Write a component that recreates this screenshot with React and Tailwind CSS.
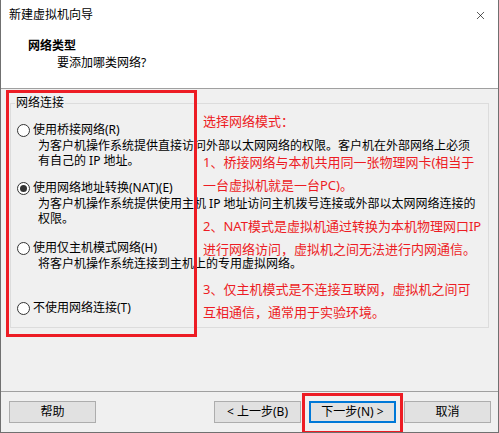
import { X } from 'lucide-react'

const options = [
  {
    label: '使用桥接网络(R)',
    desc: ['为客户机操作系统提供直接访问外部以太网网络的权限。客户机在外部网络上必须', '有自己的 IP 地址。'],
    gap: 'mt-0',
  },
  {
    label: '使用网络地址转换(NAT)(E)',
    desc: ['为客户机操作系统提供使用主机 IP 地址访问主机拨号连接或外部以太网网络连接的', '权限。'],
    checked: true,
    gap: 'mt-[12px]',
  },
  {
    label: '使用仅主机模式网络(H)',
    desc: ['将客户机操作系统连接到主机上的专用虚拟网络。'],
    gap: 'mt-[14px]',
  },
  {
    label: '不使用网络连接(T)',
    desc: [],
    gap: 'mt-[29px]',
  },
]

function Radio({ checked }) {
  return (
    <span className="w-[13px] h-[13px] rounded-full border border-[#333] bg-white flex items-center justify-center shrink-0">
      {checked && <span className="w-[7px] h-[7px] rounded-full bg-[#333]" />}
    </span>
  )
}

function Button({ children, primary }) {
  return (
    <button
      type="button"
      className={`w-[87px] h-[22px] bg-[#e1e1e1] text-[12px] leading-none text-black flex items-center justify-center ${
        primary ? 'border-2 border-[#0078d7]' : 'border border-[#adadad]'
      }`}
    >
      {children}
    </button>
  )
}

export default function App() {
  return (
    <div className="relative w-[499px] h-[433px] bg-[#f0f0f0] border-l border-r border-b border-[#707070] flex flex-col overflow-hidden text-[12px] text-black font-['Noto_Sans','Noto_Sans_CJK_SC',sans-serif]">
      {/* Header */}
      <header className="h-[89px] shrink-0 bg-white border-b border-[#a0a0a0]">
        <div className="h-[30px] flex items-center justify-between pl-[8px] pr-[11px]">
          <span className="leading-[16px]">新建虚拟机向导</span>
          <X size={13} strokeWidth={1.2} className="text-black" />
        </div>
        <div className="pl-[27px] mt-[8px] font-bold leading-[16px]">网络类型</div>
        <div className="pl-[56px] mt-[1px] leading-[16px]">要添加哪类网络?</div>
      </header>

      {/* Body */}
      <main className="flex-1 pl-[9px] pr-[9px] pt-[14px]">
        <section className="relative h-[225px] border border-[#dcdcdc] pl-[6px] pt-[18px]">
          <span className="absolute -top-[9px] left-[4px] px-[1px] bg-[#f0f0f0] leading-[16px]">网络连接</span>
          {options.map((opt) => (
            <div key={opt.label} className={opt.gap}>
              <div className="flex items-center gap-[3px] h-[16px]">
                <Radio checked={opt.checked} />
                <span className="leading-[16px] whitespace-nowrap">{opt.label}</span>
              </div>
              {opt.desc.map((line) => (
                <div key={line} className="pl-[21px] leading-[15px] whitespace-nowrap">
                  {line}
                </div>
              ))}
            </div>
          ))}
        </section>
      </main>

      {/* Footer */}
      <footer className="h-[41px] shrink-0 border-t border-[#a0a0a0] flex items-start pt-[9px] pl-[8px] pr-[7px]">
        <Button>帮助</Button>
        <div className="ml-auto flex gap-[8px]">
          <Button>&lt; 上一步(B)</Button>
          <Button primary>下一步(N) &gt;</Button>
          <Button>取消</Button>
        </div>
      </footer>

      {/* Red annotation overlays */}
      <div className="absolute left-[5px] top-[90px] w-[191px] h-[247px] border-[3px] border-[#ed1c24]" />
      <div className="absolute left-[301px] top-[393px] w-[101px] h-[41px] border-[3px] border-[#ed1c24]" />
      <div className="absolute left-[202px] top-[110px] text-[13px] leading-[23px] text-[#ed1c24] whitespace-nowrap">
        <div>选择网络模式：</div>
        <div className="mt-[18px]">1、桥接网络与本机共用同一张物理网卡(相当于</div>
        <div>一台虚拟机就是一台PC)。</div>
        <div className="mt-[18px]">2、NAT模式是虚拟机通过转换为本机物理网口IP</div>
        <div>进行网络访问，虚拟机之间无法进行内网通信。</div>
        <div className="mt-[17px]">3、仅主机模式是不连接互联网，虚拟机之间可</div>
        <div>互相通信，通常用于实验环境。</div>
      </div>
    </div>
  )
}
